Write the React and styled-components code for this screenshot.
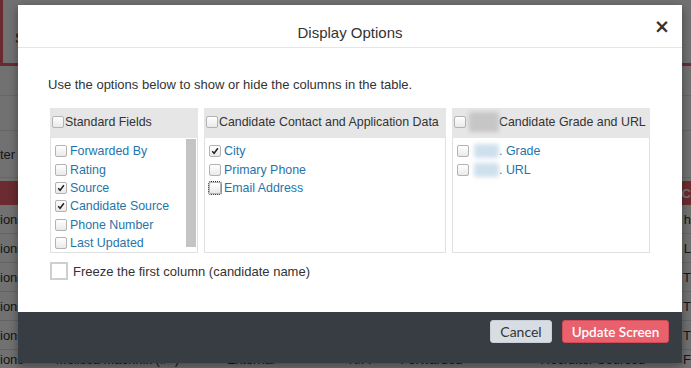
import React from 'react';
import styled, { createGlobalStyle } from "styled-components";

const Global = createGlobalStyle`
  html, body { margin: 0; padding: 0; }
  body {
    width: 691px;
    height: 368px;
    overflow: hidden;
    font-family: "Liberation Sans", Arial, sans-serif;
    background: #f7f7f7;
  }
`

const Page = styled.div`
  position: relative;
  width: 691px;
  height: 368px;
  overflow: hidden;
  display: flex;
  flex-direction: column;
  background: #fafafa;
  font-size: 13px;
  color: #333;
`

const Toolbar = styled.div`
  height: 63px;
  flex-shrink: 0;
  display: flex;
  justify-content: space-between;
  align-items: stretch;
  border-bottom: 3px solid #ea5f6b;
`

const ToolButton = styled.div`
  width: 60px;
  display: flex;
  align-items: center;
  padding-left: ${p => p.$right ? "0" : "12px"};
  border-left: ${p => p.$right ? "none" : "3px solid #ea5f6b"};
  padding-top: 12px;
  font-size: 14px;
`

const FilterArea = styled.div`
  height: 112px;
  flex-shrink: 0;
  display: flex;
  flex-direction: column;
`

const FilterLine = styled.div`
  height: ${p => p.$h}px;
  border-bottom: 1px solid #e2e2e2;
  display: flex;
  align-items: center;
`

const HeadBand = styled.div`
  height: 24px;
  flex-shrink: 0;
  margin-top: 3px;
  background: #ee5f6c;
  display: flex;
  justify-content: flex-end;
  align-items: center;
  color: #fff;
  font-weight: bold;
`

const Row = styled.div`
  height: 28px;
  flex-shrink: 0;
  border-bottom: 1px solid #dedede;
  display: flex;
  align-items: center;
  justify-content: space-between;
`

const Cell = styled.span`
  margin-left: ${p => p.$left || 0}px;
`

const LastRow = styled(Row)`
  align-items: flex-start;
  padding-top: 2px;
`

const BottomCells = styled.div`
  display: flex;
`

const Backdrop = styled.div`
  position: absolute;
  inset: 0;
  background: rgba(0, 0, 0, 0.55);
`

const Modal = styled.div`
  position: absolute;
  top: 5px;
  left: 18px;
  width: 664px;
  height: 358px;
  background: #fff;
  display: flex;
  flex-direction: column;
  box-shadow: 0 3px 9px rgba(0, 0, 0, 0.4);
`

const Header = styled.div`
  height: 42px;
  border-bottom: 1px solid #e5e5e5;
  display: grid;
  grid-template-columns: 1fr auto 1fr;
  align-items: center;
`

const Title = styled.h4`
  grid-column: 2;
  margin: 0;
  padding-top: 13px;
  font-size: 15px;
  font-weight: normal;
  color: #333;
`

const Close = styled.button`
  grid-column: 3;
  justify-self: end;
  margin-right: 12px;
  margin-top: 1px;
  border: none;
  background: none;
  padding: 0;
  font-family: "DejaVu Sans", sans-serif;
  font-size: 19px;
  font-weight: bold;
  color: #333;
  line-height: 1;
`

const Body = styled.div`
  flex: 1;
  padding: 29px 32px 0 30px;
`

const Intro = styled.p`
  margin: 0 0 16px 0;
  font-size: 13px;
  line-height: 15px;
  color: #333;
`

const Panels = styled.div`
  display: flex;
  gap: 6px;
  margin-left: 2px;
`

const Panel = styled.div`
  width: ${p => p.$w}px;
  display: flex;
  flex-direction: column;
`

const PanelHead = styled.div`
  height: 30px;
  background: #e6e6e6;
  display: flex;
  align-items: center;
  padding-left: 2px;
  padding-bottom: 3px;
  box-sizing: border-box;
  font-size: 12.4px;
  color: #333;
  white-space: nowrap;
`

const PanelBody = styled.div`
  height: 114px;
  border: 1px solid #e0e0e0;
  border-top: none;
  display: flex;
  background: #fff;
`

const List = styled.ul`
  flex: 1;
  list-style: none;
  margin: 0;
  padding: 4px 0 0 4px;
`

const Item = styled.li`
  height: 18.4px;
  display: flex;
  align-items: center;
  color: #1f75aa;
  font-size: 12.4px;
  white-space: nowrap;
`

const Scrollbar = styled.div`
  width: 10px;
  margin: 1px 1px 5px 0;
  background: #c4c4c4;
`

const Box = styled.span`
  width: 10px;
  height: 10px;
  flex-shrink: 0;
  border: 1px solid #b3b3b3;
  border-radius: 2px;
  background: linear-gradient(#ffffff, #e9e9e9);
  margin-right: ${p => p.$gap ?? 3}px;
  display: inline-flex;
  align-items: center;
  justify-content: center;
  outline: ${p => p.$focus ? "1px dotted #222" : "none"};
`

const Blur = styled.span`
  display: inline-block;
  width: ${p => p.$w}px;
  height: ${p => p.$h}px;
  background: ${p => p.$c};
  filter: blur(2px);
  border-radius: 2px;
`

const Freeze = styled.label`
  display: flex;
  align-items: center;
  margin: 9px 0 0 2px;
  font-size: 13px;
  color: #333;
`

const BigBox = styled.span`
  width: 14px;
  height: 14px;
  border: 2px solid #cfcfcf;
  margin-right: 5px;
`

const Footer = styled.div`
  height: 51px;
  background: #373d43;
  display: flex;
  justify-content: flex-end;
  align-items: flex-start;
  gap: 10px;
  padding: 8px 13px 0 0;
  box-sizing: border-box;
`

const Button = styled.button`
  width: ${p => p.$w}px;
  height: 23px;
  padding: 0;
  border-radius: 3px;
  border: 1px solid ${p => p.$primary ? "#d24b57" : "#c9cfd6"};
  background: ${p => p.$primary ? "#e9616c" : "#d8dde3"};
  color: ${p => p.$primary ? "#fff" : "#333"};
  font-family: Lato, "Liberation Sans", sans-serif;
  font-size: ${p => p.$primary ? 13.5 : 14}px;
  font-weight: ${p => p.$primary ? 600 : 400};
`

const Check = () => (
  <svg width="8" height="8" viewBox="0 0 8 8">
    <path d="M1.2 4.3 L3.1 6.3 L6.9 1.3" fill="none" stroke="#222" strokeWidth="1.5" />
  </svg>
)

const CheckBox = ({ checked, focus, gap }) => (
  <Box $focus={focus} $gap={gap}>{checked && <Check />}</Box>
)

const standard = [
  ["Forwarded By", false],
  ["Rating", false],
  ["Source", true],
  ["Candidate Source", true],
  ["Phone Number", false],
  ["Last Updated", false],
]

const contact = [
  ["City", true],
  ["Primary Phone", false],
  ["Email Address", false, true],
]

const rows = ["h", "L", "T", "T", "T"]

const App = () => {
  return (
    <Page>
      <Global />
      <Toolbar>
        <ToolButton>S</ToolButton>
        <ToolButton $right>ble</ToolButton>
      </Toolbar>
      <FilterArea>
        <FilterLine $h={29} />
        <FilterLine $h={35} />
        <FilterLine $h={46}>ter</FilterLine>
      </FilterArea>
      <HeadBand>C</HeadBand>
      {rows.map((r, i) => (
        <Row key={i}>
          <Cell>ions</Cell>
          <Cell>{r}</Cell>
        </Row>
      ))}
      <LastRow>
        <BottomCells>
          <Cell>ions</Cell>
          <Cell $left={32}>Melissa Machnik (#=)</Cell>
          <Cell $left={48}>External</Cell>
          <Cell $left={74}>N/A</Cell>
          <Cell $left={30}>Forwarded</Cell>
          <Cell $left={78}>Recruiter Sourced</Cell>
        </BottomCells>
        <Cell>F</Cell>
      </LastRow>
      <Backdrop />
      <Modal>
        <Header>
          <Title>Display Options</Title>
          <Close>×</Close>
        </Header>
        <Body>
          <Intro>Use the options below to show or hide the columns in the table.</Intro>
          <Panels>
            <Panel $w={148}>
              <PanelHead><CheckBox gap={1} />Standard Fields</PanelHead>
              <PanelBody>
                <List>
                  {standard.map(([label, on]) => (
                    <Item key={label}><CheckBox checked={on} />{label}</Item>
                  ))}
                </List>
                <Scrollbar />
              </PanelBody>
            </Panel>
            <Panel $w={242}>
              <PanelHead><CheckBox gap={1} />Candidate Contact and Application Data</PanelHead>
              <PanelBody>
                <List>
                  {contact.map(([label, on, focus]) => (
                    <Item key={label}><CheckBox checked={on} focus={focus} />{label}</Item>
                  ))}
                </List>
              </PanelBody>
            </Panel>
            <Panel $w={198}>
              <PanelHead>
                <CheckBox gap={3} />
                <Blur $w={30} $h={20} $c="#c6c6c6" />
                Candidate Grade and URL
              </PanelHead>
              <PanelBody>
                <List>
                  <Item><CheckBox gap={5} /><Blur $w={25} $h={14} $c="#cfe0ed" />. Grade</Item>
                  <Item><CheckBox gap={5} /><Blur $w={25} $h={14} $c="#cfe0ed" />. URL</Item>
                </List>
              </PanelBody>
            </Panel>
          </Panels>
          <Freeze><BigBox />Freeze the first column (candidate name)</Freeze>
        </Body>
        <Footer>
          <Button $w={62}>Cancel</Button>
          <Button $w={107} $primary>Update Screen</Button>
        </Footer>
      </Modal>
    </Page>
  )
}

export default App
